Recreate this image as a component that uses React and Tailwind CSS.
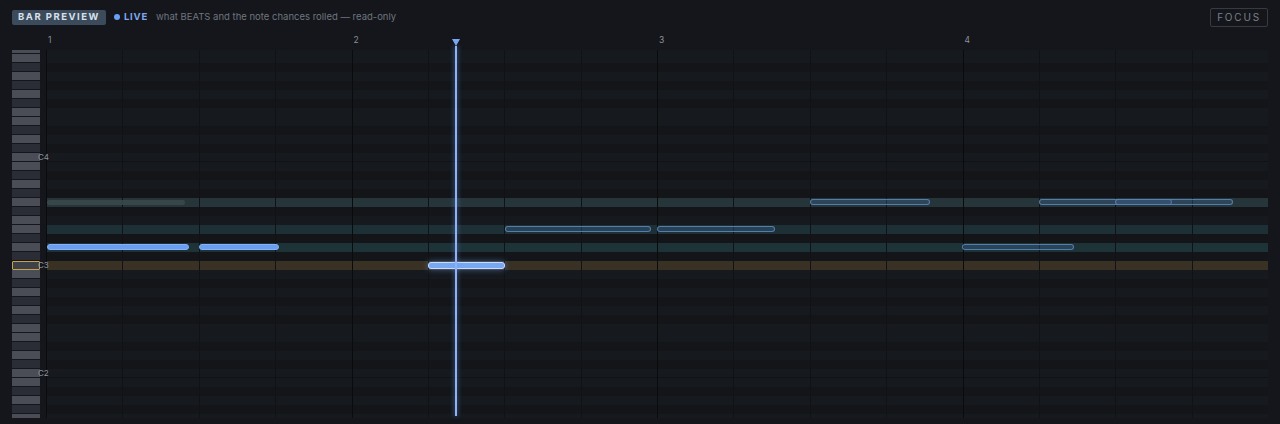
import React from "react";

const BLACK = [1, 3, 6, 8, 10];
const isBlack = (m) => BLACK.includes(((m % 12) + 12) % 12);
const NAMES = { 60: "C4", 48: "C3", 36: "C2" };

const ROWS = [];
for (let m = 72; m >= 31; m--) ROWS.push(m);
const FIRST = 72;
const LAST = 31;

const BANDS = {
  55: "h-[9px] bg-[#26353a]",
  52: "h-[9px] bg-[#1d3035]",
  50: "h-[9px] bg-[#1d3338]",
  48: "h-[9px] bg-[#393123]",
};

const NOTES = {
  55: [
    { l: 1, w: 138, k: "ghost" },
    { l: 764, w: 120, k: "out" },
    { l: 993, w: 133, k: "out" },
    { l: 1069, w: 118, k: "out" },
  ],
  52: [
    { l: 459, w: 146, k: "out" },
    { l: 611, w: 118, k: "out" },
  ],
  50: [
    { l: 1, w: 142, k: "solid" },
    { l: 153, w: 80, k: "solid" },
    { l: 916, w: 112, k: "out" },
  ],
  48: [{ l: 382, w: 77, k: "sel" }],
};

const NOTE_CLS = {
  ghost: "absolute top-[2px] h-[5px] rounded-[3px] bg-[#3c4b4d]/80",
  out: "absolute top-[1px] h-[6px] rounded-[3px] border border-[#5a84b4]/90 bg-[#3b6394]/35",
  solid: "absolute top-[1px] h-[6px] rounded-[3px] border border-[#86b1f6] bg-[#6a9ef0]",
  sel: "absolute top-[1px] h-[7px] rounded-[3px] border border-[#c8dcff] bg-[#78a8f2] shadow-[0_0_6px_rgba(120,170,255,0.55)]",
};

function rowH(m) {
  if (m === FIRST || m === LAST) return "h-[4px]";
  return "h-[9px]";
}

function keyFill(m) {
  const black = isBlack(m);
  if (m === FIRST) return black ? "h-[3px] w-[28px] bg-[#2a2d35]" : "h-[3px] w-[28px] bg-[#4a4d56]";
  if (m === LAST) return black ? "h-[4px] w-[28px] bg-[#2a2d35]" : "h-[4px] w-[28px] bg-[#4a4d56]";
  return black ? "h-[8px] w-[28px] bg-[#2a2d35]" : "h-[8px] w-[28px] bg-[#4a4d56]";
}

function Keys() {
  return (
    <div className="w-[46px] pl-[12px] h-[368px] relative z-10 flex flex-col">
      {ROWS.map((m) => {
        const sel = m === 48;
        return (
          <div key={m} className={`relative w-[28px] ${rowH(m)}`}>
            {sel ? (
              <div className="h-[9px] w-[28px] border border-[#c9a24f] bg-[#3e4148] rounded-[1px]" />
            ) : (
              <div className={keyFill(m)} />
            )}
            {NAMES[m] && (
              <span className="absolute left-[26px] top-[-1px] text-[8px] leading-[10px] text-[#8f949c] whitespace-nowrap">
                {NAMES[m]}
              </span>
            )}
          </div>
        );
      })}
    </div>
  );
}

function rowBg(m) {
  if (m === FIRST || m === LAST) return isBlack(m) ? "h-[4px] bg-[#131519]" : "h-[4px] bg-[#16191e]";
  if (BANDS[m]) return BANDS[m];
  if (isBlack(m)) return "h-[9px] bg-[#131519]";
  if (m % 12 === 0) return "h-[9px] bg-[#16191e] border-b border-[#101216]";
  return "h-[9px] bg-[#16191e]";
}

function Grid() {
  return (
    <div className="relative w-[1222px] h-[368px] overflow-hidden">
      <div className="flex flex-col">
        {ROWS.map((m) => (
          <div key={m} className={rowBg(m)} />
        ))}
      </div>
      <div className="absolute inset-0 grid grid-cols-16">
        {Array.from({ length: 16 }).map((_, i) => (
          <div
            key={i}
            className={
              i % 4 === 0
                ? "border-l border-[#090b0d]"
                : "border-l border-[#101216]"
            }
          />
        ))}
      </div>
      <div className="absolute inset-0 flex flex-col">
        {ROWS.map((m) => (
          <div key={m} className={`relative ${rowH(m)}`}>
            {(NOTES[m] || []).map((n, i) => (
              <div
                key={i}
                className={NOTE_CLS[n.k]}
                style={{ left: n.l, width: n.w }}
              />
            ))}
          </div>
        ))}
      </div>
    </div>
  );
}

export default function App() {
  const font = { fontFamily: "Inter, 'Liberation Sans', sans-serif" };
  return (
    <div className="w-[1280px] h-[424px] bg-[#14161b] overflow-hidden" style={font}>
      <div className="h-[34px] px-3 flex items-center">
        <div className="h-[15px] px-[6px] bg-[#3c4b5b] rounded-[2px] flex items-center text-[9.5px] font-bold tracking-[1.5px] text-[#d8e0ea]">
          BAR PREVIEW
        </div>
        <div className="ml-[8px] w-[6px] h-[6px] rounded-full bg-[#6b9ef5]" />
        <div className="ml-[4px] text-[9.5px] font-bold tracking-[0.8px] text-[#7ea7f0]">
          LIVE
        </div>
        <div className="ml-[8px] text-[9.5px] text-[#70757e]">
          what BEATS and the note chances rolled — read-only
        </div>
        <div className="ml-auto h-[19px] w-[58px] border border-[#363a41] rounded-[2px] flex items-center justify-center text-[10px] tracking-[1.8px] text-[#7a8089]">
          FOCUS
        </div>
      </div>
      <div className="relative">
        <div className="h-[16px] pl-[46px]">
          <div className="w-[1222px] grid grid-cols-4">
            {["1", "2", "3", "4"].map((n) => (
              <div key={n} className="pl-[2px] pt-[1px] text-[8.5px] leading-[10px] text-[#8b9099]">
                {n}
              </div>
            ))}
          </div>
        </div>
        <div className="flex">
          <Keys />
          <Grid />
        </div>
        <svg className="absolute left-[452px] top-[5px]" width="8" height="7" viewBox="0 0 8 7">
          <polygon points="0,0 8,0 4,7" fill="#7aa6f2" />
        </svg>
        <div className="absolute left-[455px] top-[12px] bottom-[2px] w-[2px] bg-[#8fb2f5] shadow-[0_0_5px_rgba(110,160,255,0.7)]" />
      </div>
    </div>
  );
}
